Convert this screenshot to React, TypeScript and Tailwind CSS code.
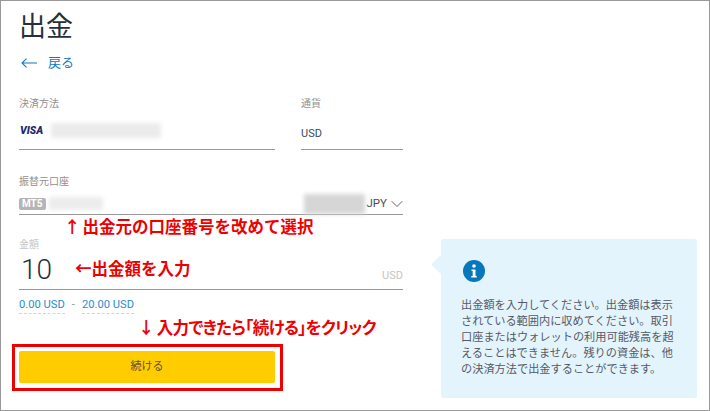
import { ChevronDown } from "lucide-react"

const jp = "font-['Roboto','Noto_Sans_CJK_JP',sans-serif]"

function Label({ children, className = "" }: { children: React.ReactNode; className?: string }) {
  return <div className={`text-[10px] leading-[14px] text-[#8f8f8f] ${className}`}>{children}</div>
}

function Smudge({ className }: { className: string }) {
  return <div className={`blur-[2px] ${className}`} />
}

export default function App() {
  return (
    <div className={`relative flex h-[411px] w-[710px] overflow-hidden border border-[#999999] bg-white pl-[18px] ${jp}`}>
      <div className="w-[384px] shrink-0">
        <h1 className="mt-[11px] text-[27px] leading-[30px] font-normal text-[#26303d]">出金</h1>
        <a className="mt-[11px] flex h-[20px] items-center text-[13px] text-[#0f7bc4]">
          <svg width="16" height="10" viewBox="0 0 16 10" fill="none" stroke="currentColor" strokeWidth="1.1" className="mr-[11px] ml-[2px]">
            <path d="M16 5H1M5.5 .7 1 5l4.5 4.3" />
          </svg>
          戻る
        </a>

        <div className="mt-[23px] flex gap-[26px]">
          <div className="w-[256px]">
            <Label className="mt-[1px]">決済方法</Label>
            <div className="mt-[8px] flex h-[31px] items-start gap-[8px] border-b border-[#999999] pt-[4px]">
              <span className="w-[24px] pl-[1px] text-[10.5px] leading-[16px] font-black italic text-[#1a2a6c]">VISA</span>
              <Smudge className="h-[15px] w-[110px] bg-[#ebebeb]" />
            </div>
          </div>
          <div className="w-[102px]">
            <Label className="mt-[1px]">通貨</Label>
            <div className="mt-[8px] flex h-[31px] items-start border-b border-[#999999] pt-[7px] text-[11px] leading-[16px] text-[#3b4a63]">USD</div>
          </div>
        </div>

        <Label className="mt-[25px]">振替元口座</Label>
        <div className="mt-[3px] flex h-[23px] items-center border-b border-[#999999] pt-[1px]">
          <span className="rounded-[2px] bg-[#b5b5b5] px-[3px] text-[10px] leading-[12px] font-bold text-white">MT5</span>
          <Smudge className="ml-[3px] h-[13px] w-[54px] bg-[#ececec]" />
          <div className="ml-auto flex items-center">
            <Smudge className="mr-[1px] h-[20px] w-[61px] bg-[#d6d6d6]" />
            <span className="text-[11.5px] text-[#4a4f57]">JPY</span>
            <ChevronDown size={20} strokeWidth={1.2} className="-mr-[4px] text-[#666666]" />
          </div>
        </div>

        <Label className="mt-[23px] text-[#c4c4c4]">金額</Label>
        <div className="mt-[2px] flex h-[36px] items-end justify-between border-b border-[#999999]">
          <span className="pb-[4px] pl-[2px] text-[28px] leading-[30px] font-light text-[#26303d]">10</span>
          <span className="pb-[6px] text-[11px] leading-[14px] text-[#c4c4c4]">USD</span>
        </div>

        <div className="mt-[8px] flex items-start text-[11.2px] leading-[14px] text-[#2b8ccc]">
          <span className="border-b border-dashed border-[#b8daf0] pb-[1px]">0.00 USD</span>
          <span className="mx-[7px] text-[#8f8f8f]">-</span>
          <span className="border-b border-dashed border-[#b8daf0] pb-[1px]">20.00 USD</span>
        </div>

        <button className="mt-[37px] h-[32px] w-[256px] rounded-[2px] bg-[#ffcc00] text-[11px] text-[#5c5430]">続ける</button>
      </div>

      <div className="relative mt-[238px] ml-[38px] h-[159px] w-[256px] rounded-[2px] bg-[#e3f4fd] px-[20px] pt-[21px]">
        <div className="absolute top-[19px] left-[-7px] h-[13px] w-[13px] rotate-45 bg-[#e3f4fd]" />
        <svg width="22" height="22" viewBox="0 0 22 22" className="relative ml-[2px]">
          <circle cx="11" cy="11" r="11" fill="#0777bb" />
          <circle cx="11" cy="6" r="1.8" fill="white" />
          <path d="M8.5 9.5h4v6.5h1.2v1.6H8.3V16h1.4v-4.9H8.5z" fill="white" />
        </svg>
        <p className="mt-[16px] text-[11.2px] leading-[16px] text-[#555a66]">
          出金額を入力してください。出金額は表示されている範囲内に収めてください。取引口座またはウォレットの利用可能残高を超えることはできません。残りの資金は、他の決済方法で出金することができます。
        </p>
      </div>

      {/* red annotations drawn over the page */}
      <div className="absolute top-[217px] left-[63px] flex gap-[2px] text-[16.5px] leading-[20px] font-bold whitespace-nowrap text-[#ee0000]">
        <span>↑</span>
        <span>出金元の口座番号を改めて選択</span>
      </div>
      <div className="absolute top-[259px] left-[74px] text-[16.5px] leading-[20px] font-bold whitespace-nowrap text-[#ee0000]">←出金額を入力</div>
      <div className="absolute top-[318px] left-[137px] flex gap-[3px] text-[16.5px] leading-[20px] font-bold tracking-[-0.7px] whitespace-nowrap text-[#ee0000] [font-feature-settings:'palt']">
        <span>↓</span>
        <span>入力できたら「続ける」をクリック</span>
      </div>
      <div className="absolute top-[343px] left-[11px] h-[47px] w-[271px] border-[3px] border-[#ee0000]" />
    </div>
  )
}
